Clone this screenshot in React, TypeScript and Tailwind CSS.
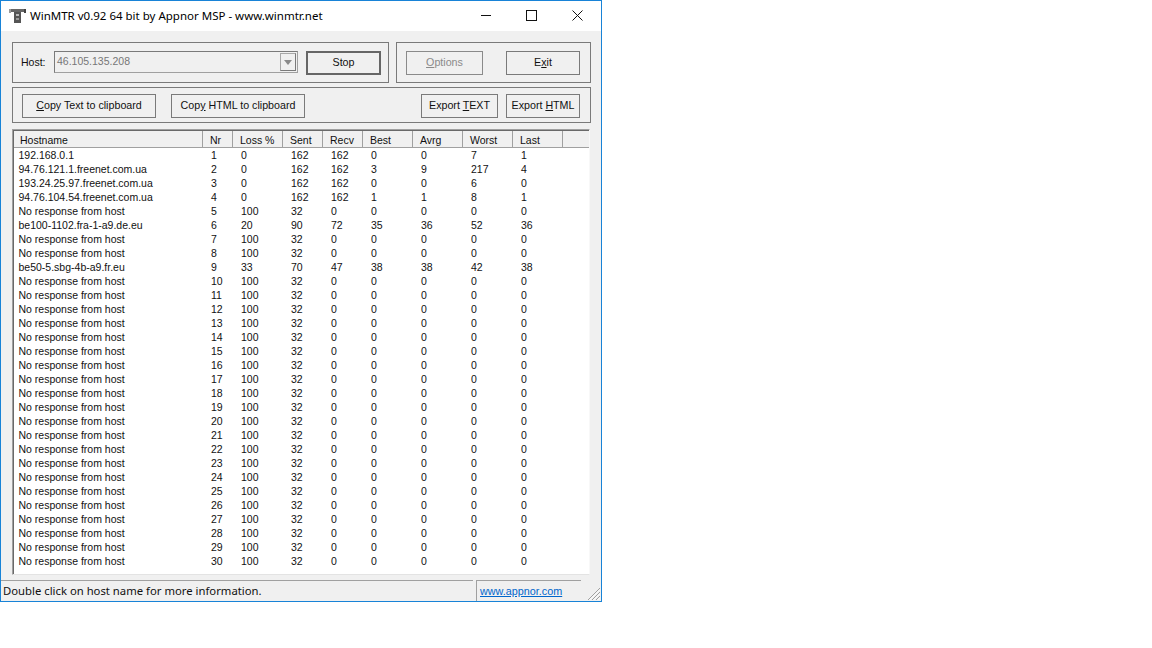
const columns = [
  { label: "Hostname", width: "w-[189px]" },
  { label: "Nr", width: "w-[30px]" },
  { label: "Loss %", width: "w-[50px]" },
  { label: "Sent", width: "w-[40px]" },
  { label: "Recv", width: "w-[40px]" },
  { label: "Best", width: "w-[50px]" },
  { label: "Avrg", width: "w-[50px]" },
  { label: "Worst", width: "w-[50px]" },
  { label: "Last", width: "w-[50px]" },
];

const firstRows: (string | number)[][] = [
  ["192.168.0.1", 1, 0, 162, 162, 0, 0, 7, 1],
  ["94.76.121.1.freenet.com.ua", 2, 0, 162, 162, 3, 9, 217, 4],
  ["193.24.25.97.freenet.com.ua", 3, 0, 162, 162, 0, 0, 6, 0],
  ["94.76.104.54.freenet.com.ua", 4, 0, 162, 162, 1, 1, 8, 1],
  ["No response from host", 5, 100, 32, 0, 0, 0, 0, 0],
  ["be100-1102.fra-1-a9.de.eu", 6, 20, 90, 72, 35, 36, 52, 36],
  ["No response from host", 7, 100, 32, 0, 0, 0, 0, 0],
  ["No response from host", 8, 100, 32, 0, 0, 0, 0, 0],
  ["be50-5.sbg-4b-a9.fr.eu", 9, 33, 70, 47, 38, 38, 42, 38],
];

const rows = [
  ...firstRows,
  ...Array.from({ length: 21 }, (_, i) => ["No response from host", i + 10, 100, 32, 0, 0, 0, 0, 0]),
];

function Btn({ children, className, disabled }: { children: React.ReactNode; className: string; disabled?: boolean }) {
  return (
    <div
      className={`flex h-[24px] items-center justify-center border border-[#7a7a7a] bg-[#f0f0f0] pb-[2px] text-[10.7px] ${
        disabled ? "text-[#8a8a8a]" : "text-[#111]"
      } ${className}`}
    >
      <span className="whitespace-pre">{children}</span>
    </div>
  );
}

function TitleIcon() {
  return (
    <svg width="18" height="16" viewBox="0 0 18 16" className="shrink-0">
      <rect x="1" y="1" width="16" height="3" fill="#666" />
      <rect x="0" y="1" width="2" height="4" fill="#999" />
      <rect x="15" y="1" width="2" height="4" fill="#444" />
      <rect x="5" y="4" width="7" height="11" fill="#555" />
      <rect x="7" y="6" width="3" height="2" fill="#bbb" />
      <rect x="7" y="10" width="3" height="2" fill="#999" />
    </svg>
  );
}

function Grip() {
  return (
    <svg width="14" height="14" viewBox="0 0 14 14" className="absolute bottom-0 right-0">
      <path d="M13 1 L1 13 M13 5 L5 13 M13 9 L9 13" stroke="#a0a0a0" strokeWidth="1" fill="none" />
      <path d="M13 2.5 L2.5 13 M13 6.5 L6.5 13 M13 10.5 L10.5 13" stroke="#fff" strokeWidth="1" fill="none" />
    </svg>
  );
}

export default function App() {
  return (
    <div className="h-[648px] w-[1152px] bg-white font-['Liberation_Sans',sans-serif] text-[10.5px] leading-[14px] text-[#111]">
      <div className="flex h-[602px] w-[602px] flex-col border border-[#1883d7] bg-[#f0f0f0]">
        {/* title bar */}
        <div className="flex h-[30px] shrink-0 items-center bg-white">
          <div className="ml-[8px] mr-[3px] flex">
            <TitleIcon />
          </div>
          <span className="font-['Noto_Sans',sans-serif] text-[11.5px] text-black">
            WinMTR v0.92 64 bit by Appnor MSP - www.winmtr.net
          </span>
          <div className="ml-auto flex items-center">
            <svg width="46" height="30" viewBox="0 0 46 30">
              <path d="M18 14.5 H28" stroke="#111" fill="none" />
            </svg>
            <svg width="46" height="30" viewBox="0 0 46 30">
              <rect x="17.5" y="9.5" width="10" height="10" stroke="#111" fill="none" />
            </svg>
            <svg width="46" height="30" viewBox="0 0 46 30">
              <path d="M17.5 9.5 L27.5 19.5 M27.5 9.5 L17.5 19.5" stroke="#111" fill="none" />
            </svg>
          </div>
        </div>

        <div className="flex min-h-0 flex-1 flex-col pl-[11px] pr-[10px] pt-[11px]">
          {/* host + options */}
          <div className="flex h-[41px] gap-[7px]">
            <div className="flex w-[377px] items-start border border-[#7a7a7a] pl-[8px] pt-[8px]">
              <span className="mt-[4px] w-[33px]">Host:</span>
              <div className="flex h-[22px] w-[244px] items-center justify-between border border-[#a0a0a0] border-l-[#7a7a7a] border-t-[#7a7a7a] pb-[2px] pl-[2px] text-[#777]">
                <span>46.105.135.208</span>
                <div className="mr-[1px] mt-[2px] flex h-[18px] w-[16px] items-center justify-center border border-[#a8a8a8] border-b-[#7a7a7a] border-r-[#7a7a7a]">
                  <div className="h-0 w-0 border-x-[4px] border-t-[5px] border-x-transparent border-t-[#8a8a8a]" />
                </div>
              </div>
              <Btn className="ml-[8px] w-[75px] border-2 border-[#666]">Stop</Btn>
            </div>
            <div className="flex w-[195px] items-start border border-[#7a7a7a] pl-[9px] pt-[8px]">
              <Btn disabled className="w-[77px] border-[#8a8a8a]">
                <span className="underline">O</span>ptions
              </Btn>
              <Btn className="ml-[23px] w-[74px]">
                E<span className="underline">x</span>it
              </Btn>
            </div>
          </div>

          {/* copy + export */}
          <div className="mt-[4px] flex h-[36px] w-[579px] items-start border border-[#7a7a7a] pl-[9px] pt-[6px]">
            <Btn className="w-[134px]">
              <span className="underline">C</span>opy Text to clipboard
            </Btn>
            <Btn className="ml-[15px] w-[134px]">
              Cop<span className="underline">y</span> HTML to clipboard
            </Btn>
            <Btn className="ml-[116px] w-[77px]">
              Export <span className="underline">T</span>EXT
            </Btn>
            <Btn className="ml-[8px] w-[74px]">
              Export <span className="underline">H</span>TML
            </Btn>
          </div>

          {/* result list */}
          <div className="mt-[6px] h-[446px] w-[578px] overflow-hidden border border-b-[#e3e3e3] border-l-[#a0a0a0] border-r-[#f8f8f8] border-t-[#a0a0a0] bg-white">
            <div className="h-full border-l border-t border-[#696969]">
              <div className="flex h-[17px] items-center bg-[#f0f0f0]">
                {columns.map((col, i) => (
                  <div
                    key={col.label}
                    className={`flex h-[17px] items-center border-b border-r border-[#a0a0a0] pt-[2px] ${col.width} ${
                      i === 0 ? "pl-[6px]" : "pl-[7px]"
                    }`}
                  >
                    {col.label}
                  </div>
                ))}
                <div className="h-[17px] flex-1 border-b border-[#a0a0a0]" />
              </div>
              {rows.map((row) => (
                <div key={String(row[1])} className="flex h-[14px] items-center">
                  {row.map((cell, i) => (
                    <div
                      key={i}
                      className={`${columns[i].width} whitespace-nowrap ${i === 0 ? "pl-[4.5px]" : "pl-[8px]"}`}
                    >
                      {cell}
                    </div>
                  ))}
                </div>
              ))}
            </div>
          </div>
        </div>

        {/* status bar */}
        <div className="relative flex h-[21px] shrink-0 font-['Noto_Sans',sans-serif] text-[11.3px]">
          <div className="flex w-[472px] items-center border-t border-[#a0a0a0] pl-[2px]">
            Double click on host name for more information.
          </div>
          <div className="ml-[3px] flex w-[105px] items-center border-l border-t border-[#a0a0a0] pl-[3px] font-['Liberation_Sans',sans-serif] text-[10.8px] text-[#0066cc] underline">
            www.appnor.com
          </div>
          <Grip />
        </div>
      </div>
    </div>
  );
}
